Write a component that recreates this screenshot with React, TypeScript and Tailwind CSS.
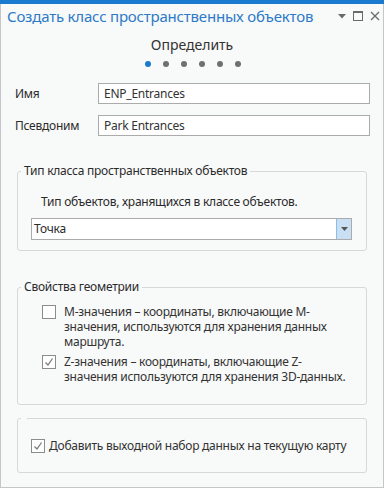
import React from 'react'

const font = { fontFamily: '"Noto Sans", "Open Sans", sans-serif' }

function CheckBox({ checked }: { checked?: boolean }) {
  return (
    <span className="flex h-[14px] w-[14px] shrink-0 items-center justify-center border border-[#8c8c8c] bg-white">
      {checked && (
        <svg width="10" height="10" viewBox="0 0 10 10">
          <path d="M1.5 5.5 L4 8 L8.5 1.5" fill="none" stroke="#7a7a7a" strokeWidth="1.3" />
        </svg>
      )}
    </span>
  )
}

export default function App() {
  return (
    <div
      className="flex h-[488px] w-[384px] flex-col border-x border-b border-[#c6c6c6] bg-[#f8f9f9] text-[12px] tracking-[-0.25px] text-[#2b2b2b]"
      style={font}
    >
      {/* Top accent */}
      <div className="-mx-px h-[4px] bg-[#1a7ad0]" />

      {/* Title bar */}
      <div className="flex h-[24px] items-center pl-[6px] pr-[3px]">
        <span className="flex-1 text-[15px] leading-none tracking-[-0.2px] text-[#2c7ac8]">
          Создать класс пространственных объектов
        </span>
        <div className="flex items-center gap-[7px]">
          <svg width="8" height="5" viewBox="0 0 8 5">
            <path d="M0 0 H8 L4 4.5 Z" fill="#6a6a6a" />
          </svg>
          <svg width="10" height="10" viewBox="0 0 10 10">
            <rect x="0.5" y="0.5" width="9" height="9" fill="none" stroke="#6a6a6a" />
            <rect x="0" y="0" width="10" height="2" fill="#6a6a6a" />
          </svg>
          <svg width="10" height="10" viewBox="0 0 10 10">
            <path d="M1 1 L9 9 M9 1 L1 9" stroke="#6a6a6a" strokeWidth="1.3" />
          </svg>
        </div>
      </div>

      {/* Step header */}
      <div className="mt-[7px] text-center text-[14px] leading-[20px] tracking-normal text-[#333]">Определить</div>
      <div className="mt-[6px] flex justify-center gap-[12px] pl-[1px]">
        <span className="h-[6px] w-[6px] rounded-full bg-[#1a7ad0]" />
        <span className="h-[6px] w-[6px] rounded-full bg-[#6f6f6f]" />
        <span className="h-[6px] w-[6px] rounded-full bg-[#6f6f6f]" />
        <span className="h-[6px] w-[6px] rounded-full bg-[#6f6f6f]" />
        <span className="h-[6px] w-[6px] rounded-full bg-[#6f6f6f]" />
        <span className="h-[6px] w-[6px] rounded-full bg-[#6f6f6f]" />
      </div>

      {/* Name fields */}
      <div className="mt-[16px] flex flex-col gap-[11px] pl-[14px] pr-[13px]">
        <div className="flex items-center">
          <span className="w-[83px]">Имя</span>
          <div className="flex h-[21px] flex-1 items-center border border-[#ababab] bg-white px-[5px] text-[#333]">
            ENP_Entrances
          </div>
        </div>
        <div className="flex items-center">
          <span className="w-[83px]">Псевдоним</span>
          <div className="flex h-[21px] flex-1 items-center border border-[#ababab] bg-white px-[5px] text-[#333]">
            Park Entrances
          </div>
        </div>
      </div>

      {/* Feature class type */}
      <fieldset className="mx-[16px] mt-[27px] h-[88px] rounded-[3px] border border-[#d8d8d8]">
        <legend className="ml-[3px] px-[3px] leading-[16px]">Тип класса пространственных объектов</legend>
        <div className="pl-[23px] pt-[15px] leading-[16px] whitespace-nowrap">
          Тип объектов, хранящихся в классе объектов.
        </div>
        <div className="ml-[13px] mr-[14px] mt-[8px] flex h-[22px] border border-[#ababab] bg-white">
          <span className="flex flex-1 items-center pl-[2px]">Точка</span>
          <span className="flex w-[15px] items-center justify-center border-l border-[#8cbce9] bg-[#c9dff3]">
            <svg width="7" height="4" viewBox="0 0 7 4">
              <path d="M0 0 H7 L3.5 4 Z" fill="#555" />
            </svg>
          </span>
        </div>
      </fieldset>

      {/* Geometry properties */}
      <fieldset className="mx-[16px] mt-[28px] h-[126px] rounded-[3px] border border-[#d8d8d8]">
        <legend className="ml-[3px] px-[3px] leading-[16px]">Свойства геометрии</legend>
        <div className="flex flex-col gap-[5px] pl-[24px] pr-[6px] pt-[9px] leading-[15px] whitespace-nowrap text-[#333]">
          <div className="flex gap-[8px]">
            <div className="pt-[1px]">
              <CheckBox />
            </div>
            <div>
              <div>M-значения – координаты, включающие M-</div>
              <div>значения, используются для хранения данных</div>
              <div>маршрута.</div>
            </div>
          </div>
          <div className="flex gap-[8px]">
            <div className="pt-[1px]">
              <CheckBox checked />
            </div>
            <div>
              <div>Z-значения – координаты, включающие Z-</div>
              <div>значения используются для хранения 3D-данных.</div>
            </div>
          </div>
        </div>
      </fieldset>

      {/* Add to map */}
      <fieldset className="mx-[16px] mt-[13px] h-[55px] rounded-[3px] border border-[#d8d8d8]">
        <legend className="ml-[3px] h-0 w-[6px]" />
        <div className="flex h-[53px] items-center gap-[4px] pl-[13px]">
          <CheckBox checked />
          <span className="whitespace-nowrap text-[#333]">Добавить выходной набор данных на текущую карту</span>
        </div>
      </fieldset>
    </div>
  )
}
